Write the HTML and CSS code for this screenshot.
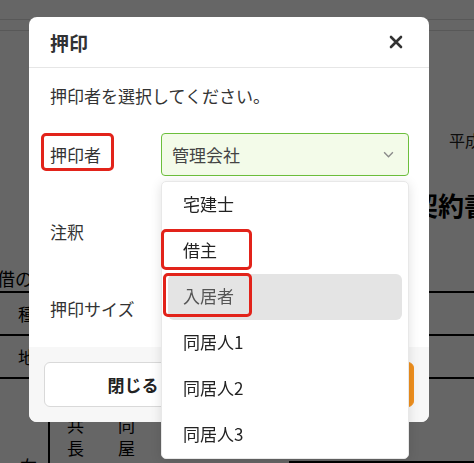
FILE: index.html
```html
<!DOCTYPE html>
<html lang="ja">
<head>
    <meta charset="UTF-8">
    <meta name="viewport" content="width=device-width, initial-scale=1.0">
    <title>押印</title>
    <link rel="stylesheet" href="styles.css">
</head>
<body>
    <div class="doc">
        <div class="doc-bar"></div>
        <div class="doc-sub"></div>
        <p class="doc-date">平成　年　月　日</p>
        <h1 class="doc-title">賃貸借契約書</h1>
        <p class="doc-lead">賃貸借の表示</p>
        <div class="doc-table">
            <div class="doc-row"><span class="doc-head">種類</span></div>
            <div class="doc-row"><span class="doc-head">地番</span></div>
            <div class="doc-row doc-row-tall">
                <div class="doc-side">右</div>
                <div class="doc-kind">
                    <span>共同建</span>
                    <span>長屋建</span>
                </div>
                <div class="doc-cell"></div>
                <div class="doc-cell doc-cell-end"></div>
            </div>
        </div>
    </div>

    <div class="overlay">
        <div class="dialog">
            <div class="dialog-header">
                <span class="dialog-title">押印</span>
                <button class="dialog-close" aria-label="閉じる">
                    <svg width="14" height="14" viewBox="0 0 14 14">
                        <path d="M2 2 L12 12 M12 2 L2 12" stroke="#333" stroke-width="2.6" stroke-linecap="round" fill="none"/>
                    </svg>
                </button>
            </div>
            <div class="dialog-body">
                <p class="dialog-msg">押印者を選択してください。</p>
                <div class="form-row">
                    <span class="form-label marked">押印者</span>
                    <div class="select select-active">
                        <span>管理会社</span>
                        <svg width="11" height="7" viewBox="0 0 12 8">
                            <path d="M1 1.5 L6 6.5 L11 1.5" stroke="#8a8a8a" stroke-width="1.6" fill="none"/>
                        </svg>
                        <ul class="dropdown">
                            <li>宅建士</li>
                            <li class="mark-a">借主</li>
                            <li class="is-hover mark-b">入居者</li>
                            <li>同居人1</li>
                            <li>同居人2</li>
                            <li>同居人3</li>
                        </ul>
                    </div>
                </div>
                <div class="form-row">
                    <span class="form-label">注釈</span>
                    <div class="select"></div>
                </div>
                <div class="form-row">
                    <span class="form-label">押印サイズ</span>
                    <div class="select"><span>標準</span></div>
                </div>
            </div>
            <div class="dialog-footer">
                <button class="btn">閉じる</button>
                <button class="btn btn-primary">押印する</button>
            </div>
        </div>
    </div>
</body>
</html>
```

FILE: styles.css
```css
body {
    margin: 0;
    overflow: hidden;
    font-family: "Noto Sans CJK JP", "Noto Sans", sans-serif;
    background: #fff;
}

/* document behind the dialog */
.doc {
    width: 474px;
    height: 463px;
    overflow: hidden;
    color: #000;
}
.doc-bar {
    height: 19px;
    border-bottom: 1px solid #dcdcdc;
}
.doc-sub {
    height: 10px;
    border-bottom: 1px solid #dcdcdc;
}
.doc-date {
    margin: 99px 0 0;
    padding-left: 449px;
    font-size: 16px;
    line-height: 20px;
    white-space: nowrap;
    color: #222;
}
.doc-title {
    margin: 38px 0 0;
    padding-left: 334px;
    font-size: 26px;
    line-height: 34px;
    font-weight: bold;
    white-space: nowrap;
}
.doc-lead {
    margin: 44px 0 0;
    font-size: 18px;
    line-height: 24px;
    text-indent: -39px;
    white-space: nowrap;
}
.doc-table {
    margin-top: 1px;
    border-top: 2px solid #000;
}
.doc-row {
    height: 41px;
    border-bottom: 2px solid #000;
    font-size: 17px;
    line-height: 41px;
}
.doc-head {
    padding-left: 18px;
}
.doc-row-tall {
    height: 90px;
    border-bottom: none;
    display: grid;
    grid-template-columns: 50px 136px 103px 1fr;
    line-height: 23px;
}
.doc-side {
    border-right: 2px solid #000;
    padding: 75px 0 0 20px;
}
.doc-kind {
    display: flex;
    flex-direction: column;
    padding: 34px 0 0 17px;
    letter-spacing: 34px;
    white-space: nowrap;
}
.doc-cell-end {
    height: 82px;
    border-bottom: 2px solid #000;
}

/* dialog */
.overlay {
    position: fixed;
    inset: 0;
    background: rgba(0, 0, 0, 0.6);
}
.dialog {
    width: 400px;
    margin: 17px 0 0 29px;
    background: #fff;
    border-radius: 8px;
}
.dialog-header {
    height: 50px;
    padding: 0 26px 0 21px;
    display: flex;
    align-items: center;
    justify-content: space-between;
    border-bottom: 1px solid #e6e6e6;
}
.dialog-title {
    font-size: 19px;
    font-weight: bold;
    color: #303133;
}
.dialog-close {
    border: none;
    background: none;
    padding: 0;
    width: 15px;
    height: 14px;
    display: flex;
    align-items: center;
    justify-content: center;
}
.dialog-body {
    padding: 16px 20px 17px 21px;
}
.dialog-msg {
    margin: 0 0 25px;
    font-size: 17px;
    line-height: 24px;
    color: #333;
}
.form-row {
    display: flex;
    align-items: center;
    justify-content: space-between;
    height: 43px;
    margin-bottom: 34px;
}
.form-row:last-child {
    margin-bottom: 0;
}
.form-label {
    position: relative;
    font-size: 17px;
    line-height: 24px;
    color: #333;
}
.marked::after {
    content: "";
    position: absolute;
    left: -9px;
    top: -10px;
    width: 73px;
    height: 38px;
    box-sizing: border-box;
    border: 3px solid #e2231a;
    border-radius: 5px;
}
.select {
    position: relative;
    width: 248px;
    height: 43px;
    box-sizing: border-box;
    border: 1px solid #dcdfe6;
    border-radius: 4px;
    padding: 0 14px 0 10px;
    display: flex;
    align-items: center;
    justify-content: space-between;
    font-size: 17px;
    color: #444;
}
.select-active {
    border-color: #6cbf3c;
    background: #f3fbe9;
}

/* dropdown list */
.dropdown {
    position: absolute;
    left: -1px;
    right: -1px;
    top: calc(100% + 6px);
    z-index: 10;
    margin: 0;
    padding: 0;
    list-style: none;
    background: #fff;
    border: 1px solid #e8e8e8;
    border-radius: 5px;
    box-shadow: 0 2px 12px rgba(0, 0, 0, 0.12);
}
.dropdown li {
    position: relative;
    height: 46px;
    line-height: 43px;
    margin: 0 6px;
    padding: 0 15px;
    font-size: 17px;
    color: #222;
    border-radius: 6px;
}
.dropdown li.is-hover {
    background: #e4e4e4;
    color: #555;
}
.mark-a::after,
.mark-b::after {
    content: "";
    position: absolute;
    box-sizing: border-box;
    border: 3px solid #e2231a;
    border-radius: 5px;
}
.mark-a::after {
    left: -7px;
    top: 1px;
    width: 91px;
    height: 41px;
}
.mark-b::after {
    left: -5px;
    top: -1px;
    width: 89px;
    height: 44px;
}

/* footer */
.dialog-footer {
    display: grid;
    grid-template-columns: 1fr 1fr;
    gap: 14px;
    padding: 15px;
    background: #f7f7f7;
    border-radius: 0 0 8px 8px;
}
.btn {
    height: 45px;
    border: 1px solid #d9d9d9;
    border-radius: 6px;
    background: #fff;
    font-family: inherit;
    font-size: 17px;
    font-weight: bold;
    color: #222;
}
.btn-primary {
    background: #f0901e;
    border-color: #f0901e;
    color: #fff;
}
```
